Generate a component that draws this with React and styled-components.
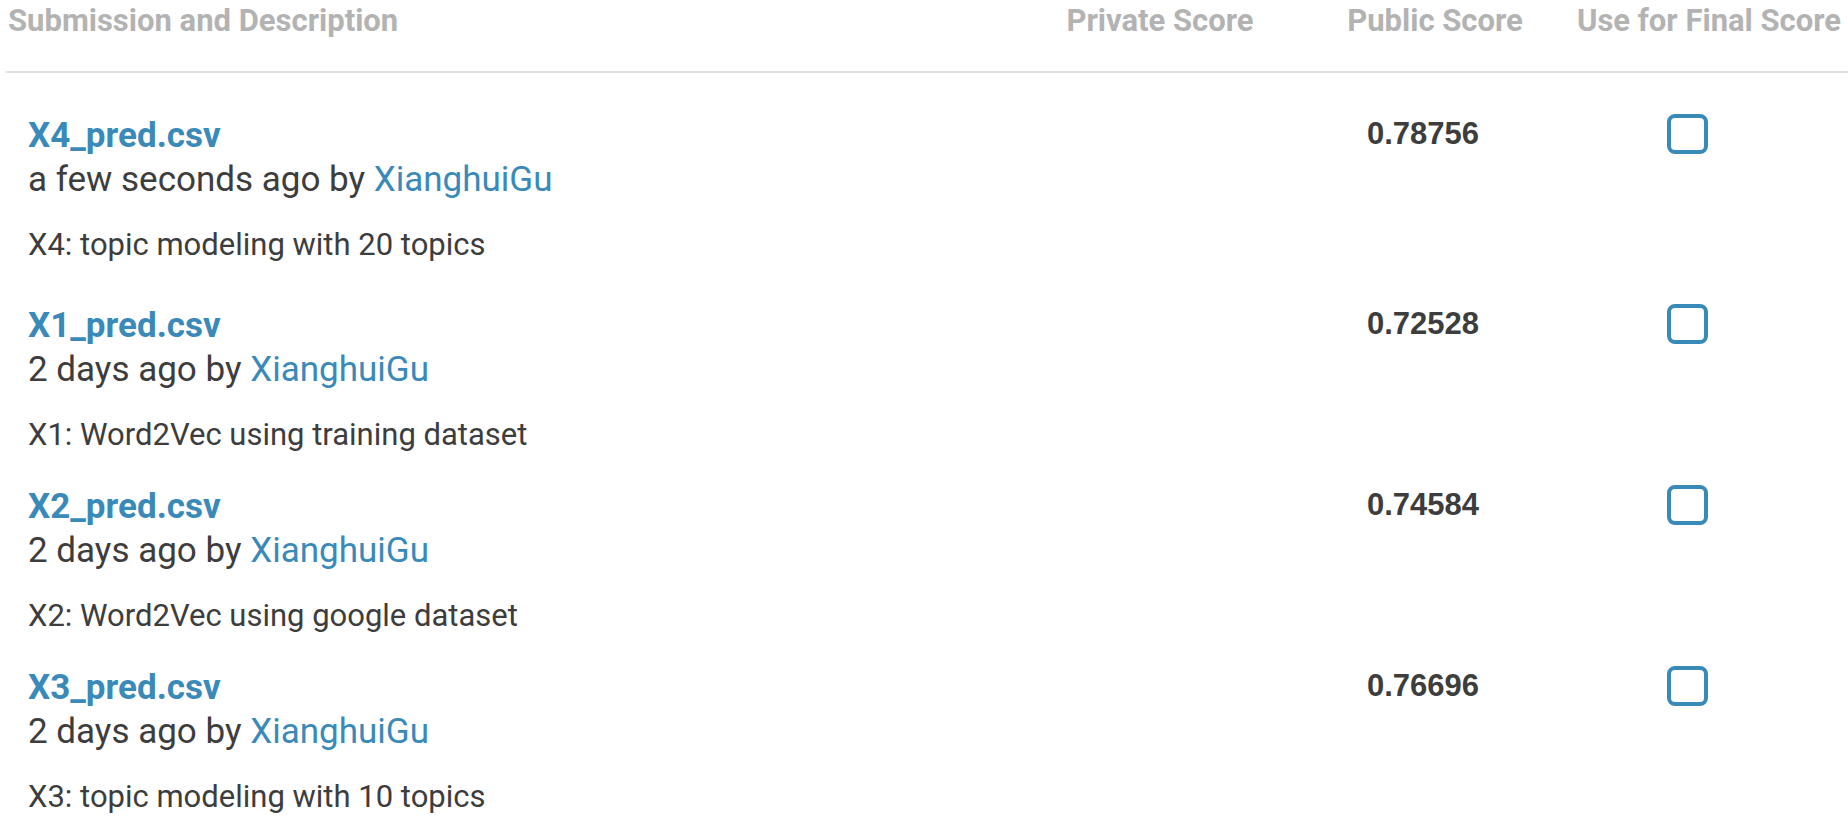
import React, { useState } from 'react';
import styled, { createGlobalStyle } from 'styled-components';

const submissions = [
  {
    file: 'X4_pred.csv',
    when: 'a few seconds ago',
    user: 'XianghuiGu',
    description: 'X4: topic modeling with 20 topics',
    publicScore: '0.78756',
  },
  {
    file: 'X1_pred.csv',
    when: '2 days ago',
    user: 'XianghuiGu',
    description: 'X1: Word2Vec using training dataset',
    publicScore: '0.72528',
  },
  {
    file: 'X2_pred.csv',
    when: '2 days ago',
    user: 'XianghuiGu',
    description: 'X2: Word2Vec using google dataset',
    publicScore: '0.74584',
  },
  {
    file: 'X3_pred.csv',
    when: '2 days ago',
    user: 'XianghuiGu',
    description: 'X3: topic modeling with 10 topics',
    publicScore: '0.76696',
  },
];

export default function App() {
  const [selected, setSelected] = useState({});

  const onToggle = file => {
    setSelected(prev => ({ ...prev, [file]: !prev[file] }));
  };

  return (
    <>
      <GlobalStyle />
      <SubmissionTable>
        <HeaderRow>
          <HeaderCell align="left">Submission and Description</HeaderCell>
          <HeaderCell>Private Score</HeaderCell>
          <HeaderCell>Public Score</HeaderCell>
          <HeaderCell>Use for Final Score</HeaderCell>
        </HeaderRow>
        <SubmissionList>
          {submissions.map(item => (
            <SubmissionRow key={item.file}>
              <SubmissionInfo>
                <FileName href="#">{item.file}</FileName>
                <MetaLine>
                  {item.when} by <UserLink href="#">{item.user}</UserLink>
                </MetaLine>
                <Description>{item.description}</Description>
              </SubmissionInfo>
              <ScoreCell />
              <ScoreCell>{item.publicScore}</ScoreCell>
              <CheckCell>
                <CheckBox
                  type="button"
                  checked={!!selected[item.file]}
                  onClick={() => onToggle(item.file)}
                />
              </CheckCell>
            </SubmissionRow>
          ))}
        </SubmissionList>
      </SubmissionTable>
    </>
  );
}

const GlobalStyle = createGlobalStyle`
  body {
    margin: 0;
    background: #ffffff;
    font-family: Roboto, 'Liberation Sans', sans-serif;
  }
`;

const SubmissionTable = styled.div`
  width: 1842px;
  padding-left: 6px;
`;

const columns = '1fr 280px 270px 278px';

const HeaderRow = styled.div`
  display: grid;
  grid-template-columns: ${columns};
  height: 71px;
  border-bottom: 2px solid #e0e0e0;
`;

const HeaderCell = styled.div`
  padding-left: ${props => (props.align === 'left' ? '2px' : '0')};
  text-align: ${props => props.align || 'center'};
  line-height: 42px;
  white-space: nowrap;
  color: #b3b3b3;
  font-size: 31px;
  font-weight: 700;
`;

const SubmissionList = styled.div`
  padding-top: 41px;
`;

const SubmissionRow = styled.div`
  display: grid;
  grid-template-columns: ${columns};
  padding-bottom: 28px;

  &:first-child {
    padding-bottom: 37px;
  }
`;

const SubmissionInfo = styled.div`
  display: flex;
  flex-direction: column;
  padding-left: 22px;
`;

const FileName = styled.a`
  align-self: flex-start;
  line-height: 44px;
  color: #3a8ab9;
  font-size: 35px;
  font-weight: 700;
  text-decoration: none;
`;

const MetaLine = styled.div`
  line-height: 44px;
  color: #3d3d3d;
  font-size: 35px;
`;

const UserLink = styled.a`
  color: #3a8ab9;
  text-decoration: none;
`;

const Description = styled.div`
  margin-top: 21px;
  line-height: 44px;
  color: #3d3d3d;
  font-size: 31px;
`;

const ScoreCell = styled.div`
  padding-right: 91px;
  text-align: right;
  line-height: 40px;
  color: #3d3d3d;
  font-family: 'Liberation Sans', Arial, sans-serif;
  font-size: 31px;
  font-weight: 700;
`;

const CheckCell = styled.div`
  padding-left: 97px;
`;

const CheckBox = styled.button`
  display: block;
  width: 41px;
  height: 40px;
  padding: 0;
  border: 4px solid #3a8ab9;
  border-radius: 8px;
  background: ${props => (props.checked ? '#3a8ab9' : '#ffffff')};
  cursor: pointer;
`;
